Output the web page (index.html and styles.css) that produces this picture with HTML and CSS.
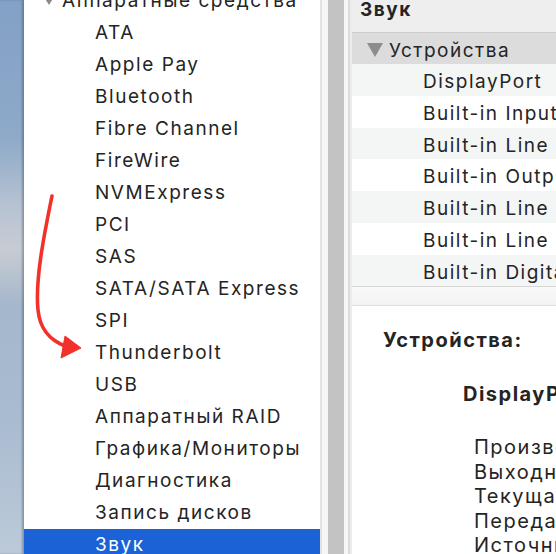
FILE: index.html
```html
<!DOCTYPE html>
<html lang="ru">
<head>
    <meta charset="UTF-8">
    <title>Информация о системе</title>
    <link rel="stylesheet" href="styles.css">
</head>
<body>
    <div class="desktop"></div>

    <div class="sidebar">
        <div class="group">
            <span class="disclosure"></span>Аппаратные средства
        </div>
        <div class="item">ATA</div>
        <div class="item">Apple Pay</div>
        <div class="item">Bluetooth</div>
        <div class="item">Fibre Channel</div>
        <div class="item">FireWire</div>
        <div class="item">NVMExpress</div>
        <div class="item">PCI</div>
        <div class="item">SAS</div>
        <div class="item">SATA/SATA Express</div>
        <div class="item">SPI</div>
        <div class="item">Thunderbolt</div>
        <div class="item">USB</div>
        <div class="item">Аппаратный RAID</div>
        <div class="item">Графика/Мониторы</div>
        <div class="item">Диагностика</div>
        <div class="item">Запись дисков</div>
        <div class="item selected">Звук</div>

        <!-- hand-drawn pointer at Thunderbolt -->
        <svg class="arrow" width="100" height="380" viewBox="0 0 100 380">
            <path d="M52 196 C44 235 35 280 38 310 C40 330 50 340 65 346" fill="none" stroke="#f2322a" stroke-width="3.6" stroke-linecap="round"/>
            <polygon points="65,336 81,348 61,358" fill="#f2322a" stroke="#f2322a" stroke-width="1" stroke-linejoin="round"/>
        </svg>
    </div>

    <div class="divider">
        <span class="edge"></span>
        <span class="gap"></span>
        <span class="bar"></span>
        <span class="gap small"></span>
        <span class="edge dark"></span>
        <span class="edge light"></span>
    </div>

    <div class="content">
        <div class="title">Звук</div>
        <div class="section"><span class="disclosure big"></span>Устройства</div>
        <div class="rows">
            <div class="row">DisplayPort</div>
            <div class="row">Built-in Input</div>
            <div class="row">Built-in Line Input</div>
            <div class="row">Built-in Output</div>
            <div class="row">Built-in Line Output</div>
            <div class="row">Built-in Line Output</div>
            <div class="row">Built-in Digital Output</div>
        </div>
        <div class="splitter"></div>
        <div class="details">
            <h2>Устройства:</h2>
            <h3>DisplayPort:</h3>
            <p>Производитель: Apple Inc.</p>
            <p>Выходной канал: Да</p>
            <p>Текущая частота дискретизации: 0</p>
            <p>Передача: DisplayPort</p>
            <p>Источник выхода: По умолчанию</p>
        </div>
    </div>
</body>
</html>
```

FILE: styles.css
```css
body{
    margin: 0;
    height: 554px;
    display: flex;
    overflow: hidden;
    font-family: 'Inter', 'Noto Sans', sans-serif;
    color: #242424;
    background: #fff;
}
.desktop{
    width: 24px;
    flex-shrink: 0;
    background: linear-gradient(180deg, #83a1c6 0%, #8ea9c9 25%, #b9c4d2 38%, #c7ccd3 45%, #a5b7cc 55%, #a9bbd0 75%, #bccad9 100%);
    box-shadow: inset -2px 0 2px rgba(40, 60, 90, 0.35);
}

/* source list */
.sidebar{
    width: 296px;
    flex-shrink: 0;
    position: relative;
    background: #fff;
    margin-top: -15px;
}
.group, .item{
    height: 32px;
    line-height: 32px;
    font-size: 19px;
    letter-spacing: 1.55px;
    white-space: nowrap;
}
.group{
    padding-left: 20px;
    display: flex;
    align-items: center;
}
.item{
    padding-left: 71px;
}
.item.selected{
    background: #1b62d7;
    color: #fff;
}
.disclosure{
    width: 0;
    height: 0;
    border-left: 5px solid transparent;
    border-right: 5px solid transparent;
    border-top: 8px solid #8a8a8a;
    margin-right: 8px;
}
.disclosure.big{
    border-left-width: 8px;
    border-right-width: 8px;
    border-top: 14px solid #8c8c8c;
    margin-right: 6px;
}
.arrow{
    position: absolute;
    left: -24px;
    top: 15px;
}

/* split view divider */
.divider{
    width: 32px;
    flex-shrink: 0;
    display: flex;
}
.divider span{
    display: block;
    height: 100%;
}
.edge{ width: 2px; background: #e3e3e3; }
.edge.dark{ background: #dcdcdc; }
.edge.light{ background: #ececec; }
.gap{ width: 6px; background: #f6f6f6; }
.gap.small{ width: 4px; }
.bar{ width: 16px; background: #c3c3c3; }

/* right pane */
.content{
    flex: 1;
    overflow: hidden;
    white-space: nowrap;
    display: flex;
    flex-direction: column;
}
.content > div{
    flex-shrink: 0;
}
.title{
    height: 33px;
    box-sizing: border-box;
    background: #eeeeee;
    border-bottom: 1px solid #cdcdcd;
    font-size: 19px;
    font-weight: 700;
    letter-spacing: 1.5px;
    line-height: 20px;
    padding-left: 8px;
}
.section{
    height: 31px;
    background: #dcdcdc;
    display: flex;
    align-items: center;
    padding: 3px 0 0 15px;
    box-sizing: border-box;
    font-size: 19px;
    letter-spacing: 1.5px;
}
.row{
    height: 31.75px;
    line-height: 35px;
    padding-left: 71px;
    font-size: 19px;
    letter-spacing: 1.5px;
}
.row:nth-child(odd){
    background: #f4f5f5;
}
.splitter{
    height: 18px;
    border-top: 1px solid #d6d6d6;
    border-bottom: 1px solid #dedede;
    background: linear-gradient(#f9f9f9, #f3f3f3);
}
.details{
    padding: 21px 0 0 31px;
    letter-spacing: 1.5px;
}
.details h2{
    margin: 0;
    font-size: 20px;
    font-weight: 700;
    line-height: 26px;
}
.details h3{
    margin: 28px 0 0 80px;
    font-size: 20px;
    font-weight: 700;
    line-height: 26px;
}
.details p{
    margin: 0 0 0 91px;
    font-size: 20px;
    line-height: 24.5px;
}
.details h3 + p{
    margin-top: 27.75px;
}
```
